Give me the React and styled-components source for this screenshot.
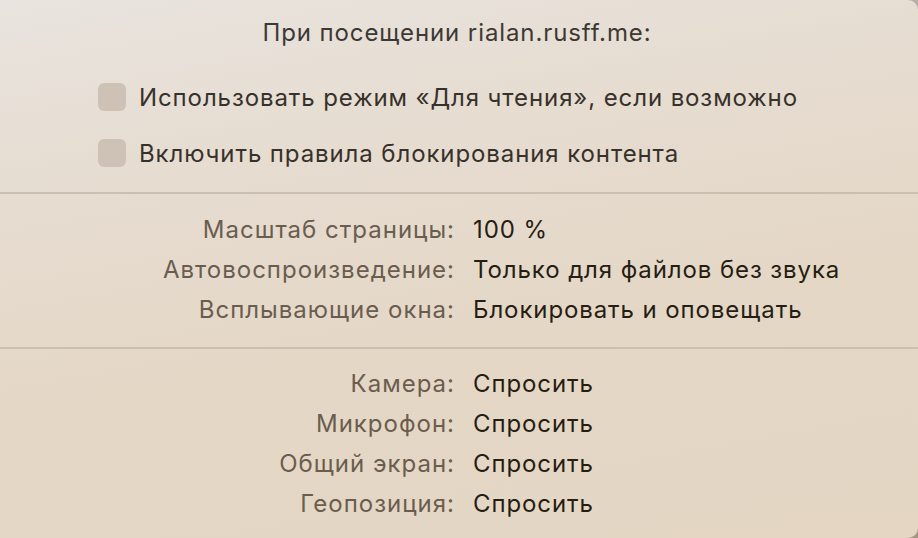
import React from "react";
import styled, { createGlobalStyle } from "styled-components";

const Global = createGlobalStyle`
  html, body { margin: 0; padding: 0; }
  body {
    width: 918px;
    height: 538px;
    overflow: hidden;
    background: linear-gradient(180deg, #b7afa7 0%, #a39482 100%);
    font-family: Inter, "Noto Sans", "Liberation Sans", sans-serif;
    -webkit-font-smoothing: antialiased;
  }
`;

const Panel = styled.div`
  width: 918px;
  height: 538px;
  box-sizing: border-box;
  border-radius: 0 10px 10px 0;
  background: linear-gradient(170deg, #e9e4df 0%, #e6dcd0 30%, #e4d7c6 60%, #e4d6c3 100%);
  padding-top: 19px;
  display: flex;
  flex-direction: column;
  font-size: 24px;
  letter-spacing: 0.9px;
`;

const Title = styled.div`
  text-align: center;
  line-height: 28px;
  color: #3c3935;
  padding-right: 4px;
`;

const CheckList = styled.div`
  display: flex;
  flex-direction: column;
  padding: 22px 0 11px 98px;
`;

const CheckRow = styled.label`
  display: flex;
  align-items: center;
  gap: 13px;
  height: 56px;
  color: #37312b;
`;

const Box = styled.span`
  width: 28px;
  height: 28px;
  border-radius: 6px;
  background: #cdc2b5;
  flex: none;
`;

const Divider = styled.div`
  height: 2px;
  background: #cbbfb0;
`;

const Grid = styled.div`
  display: grid;
  grid-template-columns: 455px auto;
  column-gap: 18px;
  padding: ${(p) => p.$pad};
`;

const Row = styled.div`
  display: contents;
`;

const Label = styled.div`
  text-align: right;
  line-height: 40px;
  color: #6a5d4f;
  white-space: nowrap;
  letter-spacing: 1px;
`;

const Value = styled.div`
  line-height: 40px;
  color: #261d13;
  white-space: nowrap;
`;

const general = [
  ["Масштаб страницы:", "100 %"],
  ["Автовоспроизведение:", "Только для файлов без звука"],
  ["Всплывающие окна:", "Блокировать и оповещать"],
];

const perms = [
  ["Камера:", "Спросить"],
  ["Микрофон:", "Спросить"],
  ["Общий экран:", "Спросить"],
  ["Геопозиция:", "Спросить"],
];

export default function App() {
  return (
    <>
      <Global />
      <Panel>
        <Title>При посещении rialan.rusff.me:</Title>
        <CheckList>
          <CheckRow>
            <Box />
            Использовать режим «Для чтения», если возможно
          </CheckRow>
          <CheckRow>
            <Box />
            Включить правила блокирования контента
          </CheckRow>
        </CheckList>
        <Divider />
        <Grid $pad="16px 0 17px">
          {general.map(([l, v]) => (
            <Row key={l}>
              <Label>{l}</Label>
              <Value>{v}</Value>
            </Row>
          ))}
        </Grid>
        <Divider />
        <Grid $pad="15px 0 0">
          {perms.map(([l, v]) => (
            <Row key={l}>
              <Label>{l}</Label>
              <Value>{v}</Value>
            </Row>
          ))}
        </Grid>
      </Panel>
    </>
  );
}
